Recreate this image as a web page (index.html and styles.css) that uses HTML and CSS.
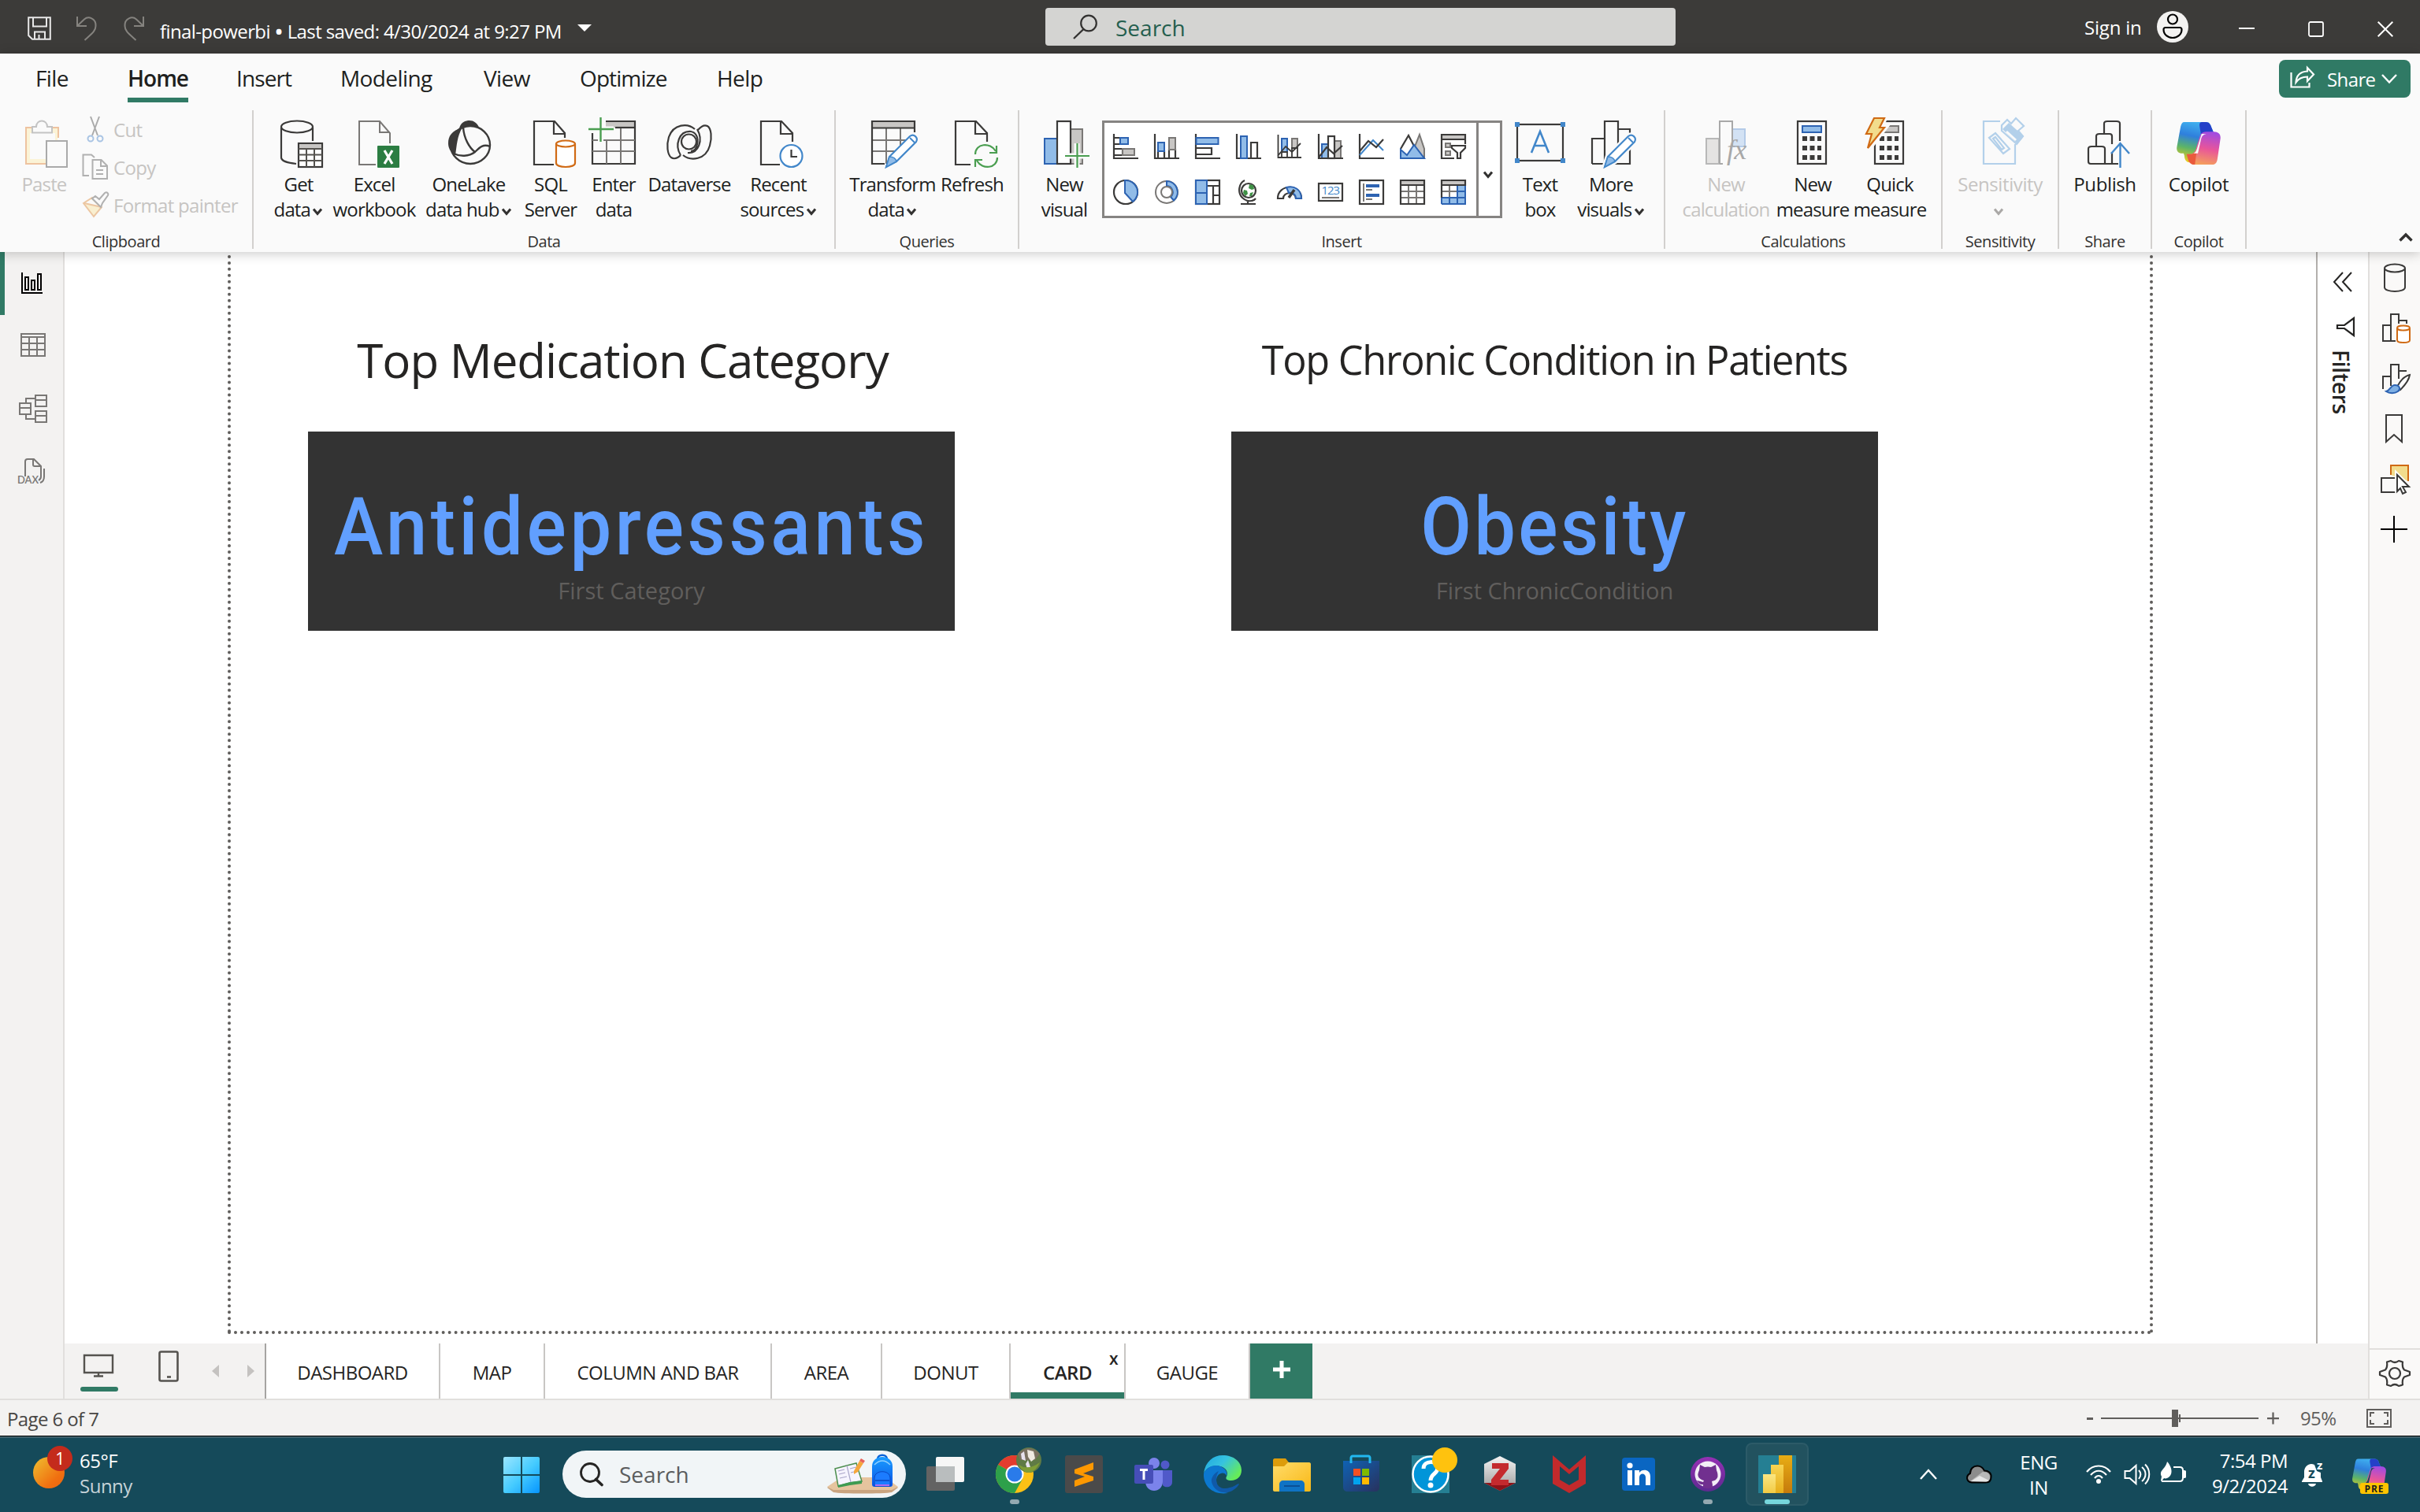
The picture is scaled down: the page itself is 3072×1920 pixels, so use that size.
FILE: index.html
```html
<!DOCTYPE html>
<html lang="en">
<head>
<meta charset="utf-8">
<title>final-powerbi</title>
<link rel="stylesheet" href="styles.css">
</head>
<body>
<svg class="defs" width="0" height="0">
  <defs>
    <linearGradient id="gWin" gradientUnits="userSpaceOnUse" x1="0" y1="0" x2="48" y2="48"><stop offset="0" stop-color="#9be6ff"/><stop offset=".5" stop-color="#45cbff"/><stop offset="1" stop-color="#0090ff"/></linearGradient>
    <linearGradient id="gSun" x1="0" y1="0" x2="1" y2="1"><stop offset="0" stop-color="#f0c030"/><stop offset=".7" stop-color="#f07010"/><stop offset="1" stop-color="#e86410"/></linearGradient>
    <linearGradient id="gCopL" x1=".5" y1="0" x2=".3" y2="1"><stop offset="0" stop-color="#3fb0ef"/><stop offset=".35" stop-color="#2f7fdc"/><stop offset=".65" stop-color="#5cb468"/><stop offset="1" stop-color="#f2cc1c"/></linearGradient>
    <linearGradient id="gCopR" x1=".6" y1="0" x2=".4" y2="1"><stop offset="0" stop-color="#a24be0"/><stop offset=".5" stop-color="#e8559a"/><stop offset="1" stop-color="#f5a25a"/></linearGradient>
    <linearGradient id="gEdge" x1="0" y1="0" x2="1" y2=".6"><stop offset="0" stop-color="#1fa6e0"/><stop offset=".5" stop-color="#36c3e0"/><stop offset="1" stop-color="#66ec58"/></linearGradient>
    <linearGradient id="gFold" x1="0" y1="0" x2="1" y2="1"><stop offset="0" stop-color="#ffdc6a"/><stop offset="1" stop-color="#f9b816"/></linearGradient>
    <linearGradient id="gStore" x1="0" y1="0" x2="1" y2="1"><stop offset="0" stop-color="#0f62b4"/><stop offset="1" stop-color="#28325e"/></linearGradient>
    <linearGradient id="gBag" x1="0" y1="0" x2="0" y2="1"><stop offset="0" stop-color="#1a9dff"/><stop offset="1" stop-color="#0a55e8"/></linearGradient>
    <linearGradient id="gGit" x1="0" y1="0" x2="0" y2="1"><stop offset="0" stop-color="#9530b4"/><stop offset="1" stop-color="#5e2a90"/></linearGradient>
    <linearGradient id="gBar1" x1="0" y1="0" x2="0" y2="1"><stop offset="0" stop-color="#e8ad14"/><stop offset="1" stop-color="#c57a0c"/></linearGradient>
    <linearGradient id="gBar2" x1="0" y1="0" x2="0" y2="1"><stop offset="0" stop-color="#f8d452"/><stop offset="1" stop-color="#e6ad1a"/></linearGradient>
    <linearGradient id="gBar3" x1="0" y1="0" x2="0" y2="1"><stop offset="0" stop-color="#fbe682"/><stop offset="1" stop-color="#f2cb45"/></linearGradient>
    <linearGradient id="gGrey" x1="0" y1="0" x2="0" y2="1"><stop offset="0" stop-color="#f4f4f4"/><stop offset="1" stop-color="#9a9a9a"/></linearGradient>
    <symbol id="chev" viewBox="0 0 14 10"><path d="M2 1.500l5 6 5-6" fill="none" stroke="currentColor" stroke-width="3"/></symbol>
    <symbol id="copilot" viewBox="0 0 64 60">
      <path d="M13 2h29c4 0 6 3 7 7l3 7h-7c-5 0-8 3-9 8l-6 24c-1 5-3 8-8 8h-2c-5 0-7-5-7-9l-1-3H10C4 44 2 40 3 35l5-27c1-4 2-6 5-6z" fill="url(#gCopL)"/>
      <path d="M36 2h6c4 0 6 3 7 7l3 7h-7c-5 0-8 3-9 8l-2-12c-1-6-2-9 2-10z" fill="#2440c8"/>
      <path d="M52 15c7 0 10 4 9 10l-4 27c-1 5-3 7-7 7H26c-4 0-7-3-8-8l-2-6h4c5 0 8-4 9-9l4-13c1-5 4-8 9-8z" fill="url(#gCopR)"/>
      <path d="M16 45h5c5 0 8-4 9-9l-3 23c-5 0-8-3-9-7z" fill="#ea5a3c"/>
      <path class="gap" d="M36 18h6c-4 1-6 3-7 8l-4 18h-6c3-1 4-4 5-7z"/>
    </symbol>
  </defs>
</svg>

<header class="titlebar">
  <div class="quick">
    <svg class="i-save" viewBox="0 0 30 30"><path d="M1.200 1.200h27.600v27.600H6l-4.800-4.800z M7 1.500v11h17v-11 M9 28.500v-9h13v9 M14.500 23v5" fill="none" stroke="#e8e8e8" stroke-width="2"/></svg>
    <svg class="i-undo" viewBox="0 0 28 30"><path d="M2 0v12h12M2 12L11 3.500C16-1 26 2 25.500 12c0 6-4 9-14 18" fill="none" stroke="#85837f" stroke-width="2"/></svg>
    <svg class="i-redo" viewBox="0 0 28 30"><path d="M26 0v12H14M26 12L17 3.500C12-1 2 2 2.500 12c0 6 4 9 14 18" fill="none" stroke="#85837f" stroke-width="2"/></svg>
    <span class="filename">final-powerbi <b>•</b> Last saved: 4/30/2024 at 9:27 PM</span>
    <i class="caret"></i>
  </div>
  <div class="search"><svg viewBox="0 0 32 32"><circle cx="20" cy="11.500" r="9.800" fill="none" stroke="#323130" stroke-width="2.200"/><path d="M13.500 19L1 31" stroke="#323130" stroke-width="2.400"/></svg><span>Search</span></div>
  <div class="winctl">
    <span class="signin">Sign in</span>
    <svg class="avatar" viewBox="0 0 40 40"><circle cx="20" cy="20" r="20" fill="#f3f2f1"/><circle cx="20" cy="10.500" r="6" fill="none" stroke="#000" stroke-width="2.200"/><path d="M11 21h18c2 0 2.500 1 2.500 2.500C31.500 30 26 34 20 34S8.500 30 8.500 23.500C8.500 22 9 21 11 21z" fill="none" stroke="#000" stroke-width="2.200"/></svg>
    <svg class="wc" viewBox="0 0 20 20"><path d="M0 9h20" stroke="#fff" stroke-width="2"/></svg>
    <svg class="wc" viewBox="0 0 20 20"><rect x="1" y="1" width="18" height="18" rx="2" fill="none" stroke="#fff" stroke-width="1.800"/></svg>
    <svg class="wc" viewBox="0 0 20 20"><path d="M.7.700l18.600 18.600M19.300.700L.7 19.300" stroke="#fff" stroke-width="2"/></svg>
  </div>
</header>

<section class="ribbon">
  <nav class="menu">
    <span class="m m-file">File</span><span class="m m-home"><b>Home</b></span><span class="m m-insert">Insert</span><span class="m m-model">Modeling</span><span class="m m-view">View</span><span class="m m-opt">Optimize</span><span class="m m-help">Help</span>
    <button class="share"><svg viewBox="0 0 32 28"><path d="M1.500 8v18.500h23V21M22 2l8 8.500-8 8.500v-5.500c-7 0-11 2-14.500 7C8 12 13 7 22 6.500z" fill="none" stroke="#fff" stroke-width="2.200"/></svg><span>Share</span><svg class="sc" viewBox="0 0 20 12"><path d="M1 1l9 9.500L19 1" fill="none" stroke="#fff" stroke-width="2.400"/></svg></button>
  </nav>
  <div class="groups">
    <div class="group g-clip">
      <div class="row">
        <div class="btn off w-paste">
          <svg class="ic" viewBox="0 0 64 64"><rect x="9" y="14" width="40" height="44" fill="#fbf3d6"/><rect x="14" y="20" width="32" height="33" fill="#fafafa"/><path d="M35 59H9V13h41v13" fill="none" stroke="#eec3a0" stroke-width="2"/><path d="M17 19.500V12h5c0-10 14-10 14 0h6v7.500z" fill="#fafafa" stroke="#c3c3c3" stroke-width="2"/><rect x="35" y="30" width="26" height="33" fill="#fafafa" stroke="#aaa" stroke-width="2"/></svg>
          <span>Paste</span>
        </div>
        <div class="clipcol">
          <div class="small"><svg viewBox="0 0 34 34"><path d="M11 1l9 24M22 1l-9 24" stroke="#ababab" stroke-width="2"/><circle cx="11" cy="29" r="3.500" fill="none" stroke="#a9c4e4" stroke-width="2"/><circle cx="23" cy="29" r="3.500" fill="none" stroke="#a9c4e4" stroke-width="2"/></svg>Cut</div>
          <div class="small"><svg viewBox="0 0 34 34"><path d="M9 28H1.500V1.500H12L16 5M13.500 8h11l7.500 7.500V32H13.500zM24 8v8h8M18 21h9M18 26h9" fill="none" stroke="#b0b0b0" stroke-width="2"/></svg>Copy</div>
          <div class="small"><svg viewBox="0 0 34 34"><path d="M2 15l11-7 12 12-10 12z" fill="#f9efd0" stroke="#ecc6a2" stroke-width="2"/><path d="M4 15l8-5 10 10z" fill="#fafafa"/><path d="M3 15l22 5" stroke="#ecc6a2" stroke-width="2"/><path d="M13 9l4-3 5 4 7-8c3-2 5 1 4 3l-7 10-2 5z" fill="#fafafa" stroke="#b0b0b0" stroke-width="2"/></svg>Format painter</div>
        </div>
      </div>
      <div class="gl">Clipboard</div>
    </div>

    <div class="group g-data">
      <div class="row">
        <div class="btn w88"><svg class="ic" viewBox="0 0 64 64"><path d="M29 59C18 58 10 55 10 51V13M50 13v17" fill="none" stroke="#3b3a39" stroke-width="2.200"/><ellipse cx="30" cy="12" rx="20" ry="7.500" fill="none" stroke="#3b3a39" stroke-width="2.200"/><rect x="32" y="33" width="30" height="30" fill="#fff" stroke="#3b3a39" stroke-width="2.200"/><rect x="33" y="34" width="28" height="5" fill="#c8c6c4"/><path d="M32 40h30M32 47.500h30M32 55h30M42 40v23M52 40v23" stroke="#55534f" stroke-width="2"/></svg><span>Get<br>data <svg class="ch"><use href="#chev"/></svg></span></div>
        <div class="btn w104"><svg class="ic" viewBox="0 0 64 64"><path d="M34 60H13V5h26l13 15v13M39 5v14h13" fill="none" stroke="#797775" stroke-width="2"/><rect x="36" y="36" width="28" height="28" rx="1" fill="#2b7d42"/><path d="M45 42l10 17M55 42L45 59" stroke="#fff" stroke-width="3.200"/></svg><span>Excel<br>workbook</span></div>
        <div class="btn w136"><svg class="ic" viewBox="0 0 64 64"><path d="M20 14C22 6 28 4 33 4s11 3 13 12c-8-3-18-3-26-2z" fill="#3b3a39"/><ellipse cx="34" cy="35" rx="25" ry="24" fill="#fafafa" stroke="#3b3a39" stroke-width="2.400"/><path d="M24 13C10 17 6 24 6 33c0 6 3 12 9 15 2-12 2-24 9-35z" fill="#3b3a39"/><path d="M13 46c8 4 19 4 27-2 5-5 10-11 19-7M25 13c1 14 8 26 15 31" fill="none" stroke="#3b3a39" stroke-width="2.400"/></svg><span>OneLake<br>data hub <svg class="ch"><use href="#chev"/></svg></span></div>
        <div class="btn w72"><svg class="ic" viewBox="0 0 64 64"><path d="M36 60H11V5h26l13 15v6M36 5v16h14" fill="none" stroke="#3b3a39" stroke-width="2.200"/><path d="M39 34v24c0 3 5 5 12 5s12-2 12-5V34" fill="#fff" stroke="#d06a14" stroke-width="2.200"/><ellipse cx="51" cy="33.500" rx="12" ry="4" fill="#fff" stroke="#d06a14" stroke-width="2.200"/></svg><span>SQL<br>Server</span></div>
        <div class="btn w88"><svg class="ic" viewBox="0 0 64 64"><rect x="22" y="4" width="37" height="9" fill="#c8c6c4"/><path d="M5 20v39h54V5H22" fill="none" stroke="#3b3a39" stroke-width="2.200"/><path d="M34 13h25" stroke="#3b3a39" stroke-width="2.200"/><path d="M5 29h54M5 43h54M23 29v30M41 14v45" stroke="#797775" stroke-width="2"/><path d="M0 15h32M15.500 0v31" stroke="#fafafa" stroke-width="7"/><path d="M0 15h32M15.500 0v31" stroke="#4a9e50" stroke-width="2.400"/></svg><span>Enter<br>data</span></div>
        <div class="btn w104"><svg class="ic" viewBox="0 0 64 64"><g fill="none" stroke="#3b3a39" stroke-width="2.200"><circle cx="31.500" cy="31" r="9.500"/><path d="M39 15C30 7 12 8 6 25c-3 10-2 22 3 26 6 4 12-3 12-3M24 48c10 8 29 6 34-12 3-10 2-22-3-25-6-3-11 4-12 5"/><path d="M21 48c-8-13-2-31 13-30 6 1 10 7 8 16-1 6-4 9-8 9M42 15c8 14 2 31-12 30"/></g></svg><span>Dataverse</span></div>
        <div class="btn w122"><svg class="ic" viewBox="0 0 64 64"><path d="M34 60H10V5h26l14 15v11M35 5v16h15" fill="none" stroke="#3b3a39" stroke-width="2.200"/><circle cx="48.500" cy="49" r="14" fill="#fff" stroke="#4287ca" stroke-width="2.200"/><path d="M48.500 41v9H56" fill="none" stroke="#3b3a39" stroke-width="2.200"/></svg><span>Recent<br>sources <svg class="ch"><use href="#chev"/></svg></span></div>
      </div>
      <div class="gl">Data</div>
    </div>

    <div class="group g-query">
      <div class="row">
        <div class="btn w120"><svg class="ic" viewBox="0 0 64 64"><rect x="6" y="5" width="54" height="9" fill="#c8c6c4"/><path d="M24 14v45M42 14v28M6 29h48M6 43h30" stroke="#797775" stroke-width="2"/><path d="M22 59H6V5h54v14M6 13.500h54" fill="none" stroke="#3b3a39" stroke-width="2.200"/><path d="M24 63l4-13 26-26c5-4 11 2 8 7L37 56z" fill="#fff" stroke="#4287ca" stroke-width="2.200"/><path d="M24 63l4-13c4 0 8 2 9 6z" fill="#91bce8" stroke="#4287ca" stroke-width="1.500"/><path d="M54 26l6 6" stroke="#4287ca" stroke-width="2"/></svg><span>Transform<br>data <svg class="ch"><use href="#chev"/></svg></span></div>
        <div class="btn w82"><svg class="ic" viewBox="0 0 64 64"><path d="M30 60H11V5h26l14 15v11M36 5v16h15" fill="none" stroke="#3b3a39" stroke-width="2.200"/><path d="M36 47c0-14 19-16 26-4M63 36v9h-9M64 51c0 14-19 16-26 4M36 63v-9h9" fill="none" stroke="#4a9e50" stroke-width="2.200"/></svg><span>Refresh</span></div>
      </div>
      <div class="gl">Queries</div>
    </div>

    <div class="group g-insert">
      <div class="row">
        <div class="btn w72"><svg class="ic" viewBox="0 0 64 64"><rect x="40" y="15" width="15" height="44" fill="#c8c6c4" stroke="#797775" stroke-width="2"/><rect x="7" y="27" width="16" height="32" fill="#91bce8" stroke="#2d63b2" stroke-width="2"/><rect x="23" y="5" width="17" height="54" fill="#fff" stroke="#3b3a39" stroke-width="2.200"/><path d="M33 49h31M48 33v31" stroke="#fafafa" stroke-width="7"/><path d="M33 49h31M48.500 33v31" stroke="#4a9e50" stroke-width="2.200"/></svg><span>New<br>visual</span></div>
        <div class="gallery">
          <div class="cells">
            <svg viewBox="0 0 32 32"><path d="M1 0v31h31" class="ax"/><path d="M2 5h7v8H2M2 19h10v8H2" class="k"/><rect x="9" y="5" width="10" height="8" class="bl"/><rect x="12" y="19" width="15" height="8" class="gr"/></svg>
            <svg viewBox="0 0 32 32"><path d="M1 0v31h31" class="ax"/><path d="M5 31v-9h8v9M19 31V20h8v11" class="k"/><rect x="5" y="11" width="8" height="11" class="bl"/><rect x="19" y="5" width="8" height="15" class="gr"/></svg>
            <svg viewBox="0 0 32 32"><path d="M1 0v31h31" class="ax"/><rect x="1.500" y="5" width="28" height="8" class="bl"/><path d="M2 18h19v8H2" class="k"/></svg>
            <svg viewBox="0 0 32 32"><path d="M1 0v31h31" class="ax"/><rect x="6" y="3" width="8" height="28" class="bl"/><path d="M19 31V11h8v20" class="k"/></svg>
            <svg viewBox="0 0 32 32"><rect x="6" y="6" width="7" height="17" class="bl"/><rect x="19" y="6" width="7" height="12" class="gr"/><path d="M6 30v-7h7v7M19 30V18h7v12" class="k2"/><path d="M1.500 1v29H31M1 28L11 16l8 7L30 12" class="k2"/></svg>
            <svg viewBox="0 0 32 32"><rect x="5" y="13" width="8" height="18" class="bl"/><rect x="21" y="9" width="8" height="22" class="gr"/><rect x="13" y="3" width="8" height="28" class="k" fill="#fff"/><path d="M1 0v31h31" class="ax"/><path d="M1 30l10-13 9 8 11-10" class="k"/></svg>
            <svg viewBox="0 0 32 32"><path d="M1 0v31h31" class="ax"/><path d="M1 27L18 8l13 13" fill="none" stroke="#4287ca" stroke-width="2"/><path d="M1 22L12 9l10 8 9-10" class="k"/></svg>
            <svg viewBox="0 0 32 32"><path d="M25 1l6 18v12H13z" class="gr"/><path d="M1 19L11 2l13 25" class="k" fill="#fff"/><path d="M1 20l8 7 9-13 13 17H1z" class="bl"/></svg>
            <svg viewBox="0 0 32 32"><rect x="1" y="1" width="30" height="6" class="gr"/><path d="M17 31H1V1h30v12M1 7h30" class="k"/><rect x="6" y="12" width="6" height="5" class="gr"/><rect x="6" y="22" width="6" height="5" class="gr"/><path d="M14 15h17v3l-6 6v7h-4v-7l-7-6z" class="k" fill="#fff"/></svg>
            <svg viewBox="0 0 32 32"><circle cx="16" cy="16" r="15" class="k" fill="#fff"/><path d="M15 1a15 15 0 0 1 10 27L15 17z" class="bl"/></svg>
            <svg viewBox="0 0 32 32"><circle cx="16" cy="16" r="14" fill="#fff" stroke="#797775" stroke-width="2"/><path d="M16 2a14 14 0 0 1 9 24.500l-4-4.500A8 8 0 0 0 16 8z" class="bl"/><circle cx="16" cy="16" r="7" fill="#fff" stroke="#797775" stroke-width="2"/></svg>
            <svg viewBox="0 0 32 32"><rect x="1" y="1" width="30" height="30" class="k" fill="#fff"/><path d="M15 8h16M23 8v23M23 20h8" class="k"/><path d="M1 1h14v30H1zM1 17h14" class="bl"/></svg>
            <svg viewBox="0 0 32 32"><circle cx="16" cy="14" r="9" class="k" fill="#fff"/><path d="M17 6l5 1 1 5-3 1-4-2zM10 13l4 1 1 4-3 3-3-4zM18 17l4-1-2 5h-3z" fill="#3f9146"/><path d="M11 1C3 5 2 17 8 23s14 5 17 1M15 27v4M6 31h19" class="k"/></svg>
            <svg viewBox="0 0 32 32"><path d="M1 24C1 5 31 5 31 24h-7c0-9-16-9-16 0z" class="k" fill="#fff"/><path d="M12 10c10-3 19 3 19 14h-7c0-5-4-8-9-7z" class="bl"/><path d="M15 23l7-10" stroke="#3b3a39" stroke-width="3.500"/></svg>
            <svg viewBox="0 0 32 32"><rect x="1" y="5" width="30" height="22" class="k" fill="#fff"/><text x="4.500" y="19" class="n123" textLength="23">123</text><path d="M5 23h22" stroke="#797775" stroke-width="2"/></svg>
            <svg viewBox="0 0 32 32"><rect x="1" y="1" width="30" height="30" class="k" fill="#fff"/><path d="M6 5v23" stroke="#797775" stroke-width="2"/><path d="M9 8h17M9 20h17" stroke="#2d63b2" stroke-width="4"/><path d="M9 13h8M9 25h8" stroke="#797775" stroke-width="2"/></svg>
            <svg viewBox="0 0 32 32"><rect x="1" y="1" width="30" height="6" fill="#c8c6c4"/><path d="M1 15h30M1 23h30M11 7v24M21 7v24" stroke="#797775" stroke-width="2"/><path d="M1 1h30v30H1zM1 7h30" class="k"/></svg>
            <svg viewBox="0 0 32 32"><rect x="1" y="1" width="30" height="6" fill="#c8c6c4"/><path d="M21 7h10v24H1v-8h20z" fill="#91bce8"/><path d="M1 15h20M11 7v16" stroke="#797775" stroke-width="2"/><path d="M21 7v24M1 23h30M11 23v8M21 15h10M1 31h30V7M1 23v8" fill="none" stroke="#2d63b2" stroke-width="2"/><path d="M1 23V1h30v6H1" class="k"/></svg>
          </div>
          <div class="drop"><svg class="ch"><use href="#chev"/></svg></div>
        </div>
        <div class="btn w80"><svg class="ic" viewBox="0 0 64 64"><rect x="3" y="9" width="58" height="46" fill="#fafafa" stroke="#3b3a39" stroke-width="2.200"/><path d="M0 6h6v6H0zM58 6h6v6h-6zM0 52h6v6H0zM58 52h6v6h-6z" fill="#4287ca"/><path d="M21 45l11-27 11 27M25 36h14" fill="none" stroke="#4287ca" stroke-width="2.600"/></svg><span>Text<br>box</span></div>
        <div class="btn w100"><svg class="ic" viewBox="0 0 64 64"><path d="M8 59V27h15M24 59V5h17v45M41 15h15v44H40M8 59h32" fill="none" stroke="#3b3a39" stroke-width="2.200"/><path d="M24 63l4-13 26-26c5-4 11 2 8 7L37 56z" fill="#fff" stroke="#fafafa" stroke-width="7"/><path d="M24 63l4-13 26-26c5-4 11 2 8 7L37 56z" fill="#fff" stroke="#4287ca" stroke-width="2.200"/><path d="M24 63l4-13c4 0 8 2 9 6z" fill="#91bce8" stroke="#4287ca" stroke-width="1.500"/><path d="M54 26l6 6" stroke="#4287ca" stroke-width="2"/></svg><span>More<br>visuals <svg class="ch"><use href="#chev"/></svg></span></div>
      </div>
      <div class="gl">Insert</div>
    </div>

    <div class="group g-calc">
      <div class="row">
        <div class="btn off w120"><svg class="ic" viewBox="0 0 64 64"><rect x="40" y="15" width="16" height="22" fill="#d3e2f4" stroke="#b4cbe8" stroke-width="2"/><rect x="7" y="27" width="16" height="32" fill="#e4e3e2" stroke="#b8b8b8" stroke-width="2"/><path d="M24 59V5h16v32M24 59h4" fill="none" stroke="#a8a8a8" stroke-width="2"/><text x="33" y="53" class="fx">fx</text></svg><span>New<br>calculation</span></div>
        <div class="btn w100"><svg class="ic" viewBox="0 0 64 64"><rect x="13" y="5" width="36" height="54" fill="#fafafa" stroke="#3b3a39" stroke-width="2.200"/><rect x="19" y="11" width="24" height="8" fill="#91bce8" stroke="#2d63b2" stroke-width="2"/><path d="M19 27h24M19 39h24M19 51h24" stroke="#3b3a39" stroke-width="6" stroke-dasharray="6 3.500"/></svg><span>New<br>measure</span></div>
        <div class="btn w96"><svg class="ic" viewBox="0 0 64 64"><rect x="13" y="5" width="36" height="54" fill="#fafafa" stroke="#3b3a39" stroke-width="2.200"/><rect x="22" y="11" width="21" height="8" fill="#c8c6c4" stroke="#797775" stroke-width="2"/><path d="M19 27h24M19 39h24M19 51h24" stroke="#3b3a39" stroke-width="6" stroke-dasharray="6 3.500"/><path d="M12 1h13l-6 12h6L5 39l5-18H2z" fill="#fafafa" stroke="#fafafa" stroke-width="8"/><path d="M12 1h13l-6 12h6L4 39l5-18H2z" fill="#f2dc8c" stroke="#d06a14" stroke-width="2.200"/></svg><span>Quick<br>measure</span></div>
      </div>
      <div class="gl">Calculations</div>
    </div>

    <div class="group g-sens">
      <div class="row">
        <div class="btn off w118"><svg class="ic" viewBox="0 0 64 64"><g fill="none" stroke="#b3d0ea" stroke-width="2.200"><path d="M32 5H11v54h40V34"/><path d="M18 26l8-6 18 20-8 6zM23 27l3-2 11 14-3 2z"/><path d="M34 10l7-7 5 5 6-7 10 10-7 6 6 7-8 10-19-17z" fill="#fafafa"/></g><path d="M35 15l8-8 19 17-8 10z" fill="#b3d0ea"/><path d="M40 18l12 11" stroke="#fafafa" stroke-width="3"/></svg><span>Sensitivity<br><svg class="ch"><use href="#chev"/></svg></span></div>
      </div>
      <div class="gl">Sensitivity</div>
    </div>
    <div class="group g-share">
      <div class="row">
        <div class="btn w96"><svg class="ic" viewBox="0 0 64 64"><g fill="none" stroke="#3b3a39" stroke-width="2.200"><path d="M11 56V40c0-2 2-3 4-3h13c2 0 4 1 4 3v19M21 36V24c0-2 2-3 4-3h13c2 0 3 1 3 3v10M31 20V8c0-2 2-3 4-3h12c2 0 4 1 4 3v22"/><path d="M49 59H14c-2 0-3-1-3-3M41 44v15"/></g><path d="M51.500 64V33M40 46l11.500-13L63 46" fill="none" stroke="#4287ca" stroke-width="2.400"/></svg><span>Publish</span></div>
      </div>
      <div class="gl">Share</div>
    </div>
    <div class="group g-cop">
      <div class="row">
        <div class="btn w96"><svg class="ic" viewBox="0 0 64 64"><use href="#copilot" x="1" y="4" width="62" height="57"/></svg><span>Copilot</span></div>
      </div>
      <div class="gl">Copilot</div>
    </div>
    <svg class="collapse" viewBox="0 0 18 12"><path d="M1.500 10.500L9 3l7.500 7.500" fill="none" stroke="#323130" stroke-width="3.400"/></svg>
  </div>
</section>

<main class="work">
  <nav class="rail">
    <div class="rl on"><svg viewBox="0 0 36 36"><path d="M5 4v26h26M9 10h4v16H9zM17 14h4v12h-4zM25 6h4v20h-4z" fill="none" stroke="#000" stroke-width="2"/></svg></div>
    <div class="rl"><svg viewBox="0 0 36 36"><path d="M3 4h30v28H3zM3 8h30M3 16h30M3 24h30M13 8v24M23 8v24" fill="none" stroke="#797775" stroke-width="2"/></svg></div>
    <div class="rl"><svg viewBox="0 0 36 36"><path d="M1 11h14v14H1zM1 17h14M21 1h14v14H21zM21 7h14M21 21h14v14H21zM21 27h14M9 11V5h12M9 25v6h12" fill="none" stroke="#797775" stroke-width="2"/></svg></div>
    <div class="rl"><svg viewBox="0 0 36 36"><path d="M10 24V5c0-2 1-3 3-3h8l9 9v13c0 3-1 4-3 5M20 2v7c0 1 1 2 2 2h8M34 14v10c0 5-2 7-5 8" fill="none" stroke="#797775" stroke-width="2"/><text x="0" y="33" class="dax" textLength="27" lengthAdjust="spacingAndGlyphs">DAX</text></svg></div>
  </nav>
  <div class="center">
    <div class="canvas">
      <div class="page"></div>
      <h2 class="vt vt1">Top Medication Category</h2>
      <h2 class="vt vt2">Top Chronic Condition in Patients</h2>
      <div class="card c1"><div class="val">Antidepressants</div><div class="cap">First Category</div></div>
      <div class="card c2"><div class="val">Obesity</div><div class="cap">First ChronicCondition</div></div>
    </div>
    <aside class="filters">
      <svg class="dbl" viewBox="0 0 26 26"><path d="M13 1L2 13l11 12M24 1L13 13l11 12" fill="none" stroke="#252423" stroke-width="2"/></svg>
      <svg class="fun" viewBox="0 0 24 26"><path d="M22 2v22L10 15H1v-4h9z" fill="none" stroke="#252423" stroke-width="2.200"/></svg>
      <span>Filters</span>
    </aside>
    <footer class="tabs">
      <div class="views">
        <div class="desk"><svg viewBox="0 0 40 30"><path d="M2 2h36v22H2zM20 24v4M14 28.500h12" fill="none" stroke="#55534f" stroke-width="2.400"/></svg><i></i></div>
        <svg class="phone" viewBox="0 0 26 40"><rect x="1.500" y="1.500" width="23" height="37" rx="2" fill="none" stroke="#55534f" stroke-width="2.600"/><path d="M11 33.500h5" stroke="#55534f" stroke-width="2.600"/></svg>
        <svg class="al" viewBox="0 0 9 16"><path d="M9 0v16L0 8z" fill="#c4c2c0"/></svg>
        <svg class="ar" viewBox="0 0 9 16"><path d="M0 0v16l9-8z" fill="#c4c2c0"/></svg>
      </div>
      <div class="tab t1">DASHBOARD</div><div class="tab t2">MAP</div><div class="tab t3">COLUMN AND BAR</div><div class="tab t4">AREA</div><div class="tab t5">DONUT</div><div class="tab t6 active"><b>CARD</b><em>x</em></div><div class="tab t7">GAUGE</div>
      <div class="add"><svg viewBox="0 0 22 22"><path d="M11 0v22M0 11h22" stroke="#fff" stroke-width="5"/></svg></div>
    </footer>
  </div>
  <nav class="panes">
    <svg viewBox="0 0 40 40"><path d="M7 9v24c0 3 6 5 13 5s13-2 13-5V9" fill="none" stroke="#3b3a39" stroke-width="2"/><ellipse cx="20" cy="8.500" rx="13" ry="5" fill="none" stroke="#3b3a39" stroke-width="2"/></svg>
    <svg viewBox="0 0 40 40"><path d="M21 37H5V17h9M15 37V3h10v12M25 11h10v4" fill="none" stroke="#3b3a39" stroke-width="2"/><path d="M23 21v15c0 2 4 3 8 3s8-1 8-3V21" fill="#fff" stroke="#d06a14" stroke-width="2"/><ellipse cx="31" cy="20.500" rx="8" ry="3" fill="#fff" stroke="#d06a14" stroke-width="2"/></svg>
    <svg viewBox="0 0 40 40"><path d="M5 34V18h9M15 30V3h10v18M25 11h10" fill="none" stroke="#3b3a39" stroke-width="2"/><path d="M39 16c-8 2-13 9-16 15l4 4c6-6 11-12 12-19z" fill="#fff" stroke="#3b3a39" stroke-width="2"/><path d="M9 37c5-1 6-8 11-8 6 0 8 5 4 8-4 3-11 3-15 0z" fill="#7fb0e4" stroke="#2d63b2" stroke-width="2"/></svg>
    <svg viewBox="0 0 40 40"><path d="M9 3h20v34l-10-9-10 9z" fill="none" stroke="#3b3a39" stroke-width="2"/></svg>
    <svg viewBox="0 0 40 40"><path d="M15 15V3h22v20" fill="#f2dc8c" stroke="#d06a14" stroke-width="2"/><path d="M21 37H3V19h18" fill="#faf9f8" stroke="#3b3a39" stroke-width="2"/><path d="M20 8l20 20-8 2 4 8-6 3-4-7-6 4z" fill="#fff"/><path d="M23 15l15 15h-8l4 7-4 2-3-7-4 4z" fill="#fff" stroke="#3b3a39" stroke-width="2"/></svg>
    <svg viewBox="0 0 40 40"><path d="M19 3v34M2 20h34" stroke="#000" stroke-width="2"/></svg>
    <div class="gear"><svg viewBox="0 0 40 40"><path d="M15 4q5 4 10 0l5 1.500q-1 7 2 10l7 2.500v4l-7 2.500q-3 3-2 10L25 36q-5-4-10 0l-5-1.500q1-7-2-10l-7-2.500v-4l7-2.500q3-3 2-10z" fill="none" stroke="#3b3a39" stroke-width="2.200" stroke-linejoin="round"/><circle cx="20" cy="20" r="7" fill="none" stroke="#3b3a39" stroke-width="2.200"/></svg></div>
  </nav>
</main>

<div class="status">
  <span class="pg">Page 6 of 7</span>
  <div class="zoom">
    <i class="minus"></i><div class="track"><i></i><u></u></div>
    <svg class="plus" viewBox="0 0 16 16"><path d="M8 0v16M0 8h16" stroke="#605e5c" stroke-width="2.400"/></svg>
    <span>95%</span>
    <svg class="fit" viewBox="0 0 32 24"><path d="M1 1h30v22H1zM5 10V5h5M22 5h5v5M27 14v5h-5M10 19H5v-5" fill="none" stroke="#605e5c" stroke-width="2"/></svg>
  </div>
</div>

<footer class="taskbar">
  <div class="weather">
    <svg viewBox="0 0 52 56"><circle cx="20" cy="34" r="20" fill="url(#gSun)"/><circle cx="34" cy="16" r="16" fill="#c42b1c"/><text x="34" y="23.500" class="one">1</text></svg>
    <div><span>65°F</span><span class="dim">Sunny</span></div>
  </div>
  <svg class="win" viewBox="0 0 46 46"><path d="M2 0h20v22H0V2a2 2 0 0 1 2-2zM24 0h20a2 2 0 0 1 2 2v20H24zM0 24h22v22H2a2 2 0 0 1-2-2zM24 24h22v20a2 2 0 0 1-2 2H24z" fill="url(#gWin)"/></svg>
  <div class="tsearch">
    <svg class="mag" viewBox="0 0 30 30"><circle cx="13" cy="13" r="11.500" fill="none" stroke="#252423" stroke-width="2.800"/><path d="M20.500 21.500l7.500 7" stroke="#252423" stroke-width="3.600" stroke-linecap="round"/></svg>
    <span>Search</span>
    <svg class="art" viewBox="0 0 90 50"><path d="M0 42l18-12h56l16 12-8 6c-10 2-64 2-74 0z" fill="#c9a480"/><path d="M0 41l18-12h56l16 12-8 4H8z" fill="#e6c49e"/><path d="M10 18l15-4 12-3 7 23-15 2-15 4z" fill="#f6f4ff" stroke="#4d8f4e" stroke-width="1.500"/><path d="M14 39l15-4 15-2v4l-15 2-15 3z" fill="#3f9b52"/><path d="M25 14l5 21M14 21l8-2M15 25l8-2M16 30l9-2M29 18l8-2M30 23l8-2" stroke="#a9a6c8" stroke-width="1.200"/><path d="M34 21l7-13 5 3-7 11-5 3z" fill="#f6a63c"/><path d="M41 8l2-3 5 3-2 3z" fill="#e8625a"/><path d="M64 6c0-7 12-7 12 0" fill="none" stroke="#0a62d8" stroke-width="2.500"/><path d="M57 38V15c0-16 26-16 26 0v23c0 2-1 3-3 3H60c-2 0-3-1-3-3z" fill="url(#gBag)"/><path d="M60 13q10-10 20 0" fill="none" stroke="#8fd0ff" stroke-width="1.500"/><path d="M60 40V30c0-11 20-11 20 0v10z" fill="#1c7cff" stroke="#0a48c0"/><path d="M61 33h18" stroke="#0a48c0" stroke-width="1.500"/><path d="M61 39h18" stroke="#b06cf0" stroke-width="2"/></svg>
  </div>
  <div class="apps">
    <div class="app"><svg viewBox="0 0 48 48"><rect x="12" y="2" width="36" height="32" rx="2" fill="#f6f6f6"/><rect x="0" y="14" width="36" height="31" rx="2" fill="#636363"/><path d="M12 14h24v20H12z" fill="#b9bdbe"/></svg></div>
    <div class="app run"><svg viewBox="0 0 48 48"><circle cx="24" cy="24" r="24" fill="#fbc116"/><path d="M24 24L3.200 12A24 24 0 0 1 44.800 12z" fill="#e33b2e"/><path d="M24 24L3.200 12A24 24 0 0 0 24 48l10-18z" fill="#2da04a"/><path d="M24 13h21a24 24 0 0 0-.5-1z" fill="#e33b2e"/><circle cx="24" cy="24" r="11.500" fill="#fff"/><circle cx="24" cy="24" r="9.500" fill="#2a7bea"/></svg>
      <svg class="badge" viewBox="0 0 32 32"><circle cx="16" cy="16" r="16" fill="#5f7a45"/><path d="M2 8q14-14 28 0l-6 8H5z" fill="#79705f"/><path d="M14 3l8 2 2 9-5 4-4-6z" fill="#efe9e0"/><path d="M6 8l4-3 2 12-5-2zM12 21l3-5 3 9-4 2z" fill="#e8e2ee"/><path d="M3 22q12 8 27-3-5 12-14 13-9-1-13-10z" fill="#7f9d36"/></svg></div>
    <div class="app"><svg viewBox="0 0 48 48"><rect width="48" height="48" rx="3" fill="#4a4a4a"/><path d="M12 18l24-9v9l-13 5 13 4v5l-24 8v-8l13-5-13-4z" fill="#ff9800"/></svg></div>
    <div class="app"><svg viewBox="0 0 48 48"><circle cx="39" cy="12" r="5.500" fill="#5059c9"/><path d="M33 19h15v15c0 7-9 8-12 4z" fill="#5059c9"/><circle cx="25" cy="10" r="7" fill="#7b83eb"/><path d="M14 19h22v14c0 16-22 16-22 0z" fill="#7b83eb"/><rect x="0" y="12" width="24" height="24" rx="2" fill="#464eb8"/><path d="M7 18.500h10M12 18.500V31" stroke="#fff" stroke-width="3"/></svg></div>
    <div class="app"><svg viewBox="0 0 48 48"><path d="M0 23C2 8 12 0 24 0c14 0 24 8 24 19 0 8-6 13-13 13-5 0-8-2-6-5 2-4 1-9-5-12C15 11 4 14 0 23z" fill="url(#gEdge)"/><path d="M0 23c5-10 16-12 23-8 6 3 7 8 6 11-3-7-13-3-13 6 0 8 7 15 15 16C13 51-1 40 0 23z" fill="#0c78d0"/><path d="M16 31c0 10 9 13 17 10 5-1 9-4 11-5 1 0 1 1 0 2-9 13-29 13-34-4-1-6 4-12 9-14-2 3-3 7-3 11z" fill="#1059a8"/></svg></div>
    <div class="app"><svg viewBox="0 0 48 48"><path d="M0 6c0-1 1-2 2-2h14l4 5v8H0z" fill="#dd9c0b"/><path d="M0 14h14l5-5h27c1 0 2 1 2 2v33c0 1-1 2-2 2H2c-1 0-2-1-2-2z" fill="url(#gFold)"/><path d="M8 46V37c0-3 2-5 5-5h22c3 0 5 2 5 5v9z" fill="#0f73c4"/><path d="M14 39h20" stroke="#0a4f96" stroke-width="2"/></svg></div>
    <div class="app"><svg viewBox="0 0 48 48"><path d="M1 7h46v33c0 4-2 6-6 6H7c-4 0-6-2-6-6z" fill="url(#gStore)"/><path d="M11 10V3c0-1 1-2 2-2h20c1 0 2 1 2 2v7" fill="none" stroke="#22b8f0" stroke-width="3"/><path d="M14 17h9v9h-9z" fill="#f25022"/><path d="M25 17h9v9h-9z" fill="#7fba00"/><path d="M14 28h9v9h-9z" fill="#00a4ef"/><path d="M25 28h9v9h-9z" fill="#ffb900"/></svg></div>
    <div class="app"><svg viewBox="0 0 48 48"><rect width="48" height="48" fill="#257f93"/><circle cx="24" cy="24" r="22.500" fill="#0095d9" stroke="#fff" stroke-width="2.500"/><path d="M15 17c0-11 18-11 18-1 0 8-9 7-9 16" fill="none" stroke="#fff" stroke-width="5"/><circle cx="24" cy="38" r="3.500" fill="#fff"/></svg><i class="badge dotb"></i></div>
    <div class="app"><svg viewBox="0 0 48 48"><path d="M24 1l20 10v24L24 45 4 35V11z" fill="url(#gGrey)"/><path d="M24 35h20L24 45 4 35z" fill="#8e1218"/><path d="M14 10h21v7l-11 14h11v7H13v-7l11-14H14z" fill="#c42a2e"/></svg></div>
    <div class="app"><svg viewBox="0 0 48 48"><path d="M3 0l21 18L45 0v36L24 48 3 36zM12 14v17l12 7 12-7V14L24 24z" fill="#c22a2c" fill-rule="evenodd"/></svg></div>
    <div class="app"><svg viewBox="0 0 48 48"><rect x="3" y="3" width="42" height="42" rx="4" fill="#0a66c2"/><path d="M10 19h6v19h-6zM19 19h6v3c3-5 14-5 14 5v11h-6V28c0-6-8-6-8 0v10h-6z" fill="#fff"/><circle cx="13" cy="13" r="3.600" fill="#fff"/></svg></div>
    <div class="app run"><svg viewBox="0 0 48 48"><circle cx="24" cy="24" r="22" fill="url(#gGit)"/><circle cx="24" cy="24" r="16.500" fill="#f3eef6"/><path d="M14 12l6 3q4-1 8 0l6-3 1 7q5 12-6 14 1 3 1 8-6 2-12 0v-4q-5 1-8-5 5 1 8 2l1-2q-11-3-6-13z" fill="#71308f"/></svg></div>
    <div class="app current"><svg viewBox="0 0 48 48"><rect width="48" height="48" fill="#257f93"/><path d="M26 0h17v48H26z" fill="url(#gBar1)"/><path d="M16 12h16v36H16z" fill="url(#gBar2)"/><path d="M6 24h16v24H6z" fill="url(#gBar3)"/></svg></div>
  </div>
  <div class="tray">
    <svg class="t-chev" viewBox="0 0 22 14"><path d="M1 13L11 2l10 11" fill="none" stroke="#fff" stroke-width="2.400"/></svg>
    <svg class="t-cloud" viewBox="0 0 34 24"><path d="M8 22.500C1 22 0 14 6 11c0-6 4-9.500 9-9.500 4 0 7 2 9 6 5 0 9 3 8.500 8 0 5-3 7-7 7z" fill="#8c8c8c" stroke="#000" stroke-width="2"/><path d="M6 21L22 9c6 0 9 3 9 7 0 4-3 5-6 5z" fill="#b8b8b8"/><path d="M7 21l11-7 12 6c-2 1-3 1.500-5 1.500z" fill="#e6e6e6"/></svg>
    <div class="lang"><span>ENG</span><span>IN</span></div>
    <svg class="t-wifi" viewBox="0 0 32 24"><path d="M1 9C9-1 23-1 31 9M6 13c6-7 14-7 20 0M11 17c3-4 7-4 10 0" fill="none" stroke="#fff" stroke-width="2.200"/><circle cx="16" cy="21" r="3" fill="#fff"/></svg>
    <svg class="t-vol" viewBox="0 0 34 28"><path d="M1.500 10v9h6l8 7V3l-8 7zM19 9c3 3 3 7 0 11M23 5c6 5 6 13 0 18M27 1.500c7 7 7 18 0 25" fill="none" stroke="#fff" stroke-width="2"/></svg>
    <svg class="t-bat" viewBox="0 0 34 28"><path d="M17 7h8c3 0 4 1 4 4v10c0 3-1 4-4 4H2" fill="none" stroke="#fff" stroke-width="2"/><path d="M30 11c3 0 3 1 3 2v6c0 1 0 2-3 2z" fill="#fff"/><path d="M9 0c5 5 8 14 3 19-2 2-5 3-7 2l-3 4-1-1 1-5C-2 11 7 10 9 0z" fill="#fff"/></svg>
    <div class="clock"><span>7:54 PM</span><span>9/2/2024</span></div>
    <svg class="t-bell" viewBox="0 0 28 32"><path d="M0 24l3-5V11C4 4 10 0 16 3l3 8 5 2v6l2 5v1H0zM8 27h10c-1 5-9 5-10 0z" fill="#fff"/><text x="8" y="20" class="z1">z</text><text x="19" y="9" class="z2">z</text></svg>
    <svg class="t-cop" viewBox="0 0 50 48"><use href="#copilot" x="0" y="0" width="47" height="44"/><rect x="12" y="32" width="36" height="14" rx="3" fill="#ffc400"/><text x="30" y="43.500" class="pre">PRE</text></svg>
  </div>
</footer>
</body>
</html>
```
FILE: styles.css
```css
* { box-sizing: border-box; }
html, body { margin: 0; }
body {
  width: 3072px; height: 1920px; overflow: hidden; background: #fff;
  font-family: "Open Sans", "Noto Sans", sans-serif;
  font-size: 24px; letter-spacing: -.6px; color: #201f1e;
  display: flex; flex-direction: column;
}
svg { display: block; flex: none; overflow: visible; }
.defs { position: absolute; }
.gap { fill: var(--gap, #fafafa); }
b, em, i { font-style: normal; }

/* title bar */
.titlebar { height: 68px; background: #3c3b39; color: #fff; display: grid; grid-template-columns: 1327px 800px 1fr; flex: none; }
.quick { display: flex; align-items: flex-start; padding-left: 35px; white-space: nowrap; }
.i-save { width: 30px; height: 30px; margin-top: 21px; }
.i-undo, .i-redo { width: 28px; height: 30px; margin-top: 21px; }
.i-undo { margin-left: 31px; }
.i-redo { margin-left: 32px; }
.filename { margin-left: 19px; margin-top: 24px; line-height: 32px; width: 517px; }
.filename b { margin: 0 1px; }
.caret { border: 9px solid transparent; border-top: 9px solid #fff; border-bottom: 0; margin: 31px 0 0 13px; }
.search { height: 48px; margin-top: 10px; border-radius: 4px; background: #d4d4d2; color: #255f4f; font-size: 28px; letter-spacing: 0; display: flex; align-items: center; padding-left: 35px; }
.search svg { width: 32px; height: 32px; margin-right: 22px; }
.search span { line-height: 40px; margin-top: 2px; }
.winctl { display: flex; padding-left: 519px; letter-spacing: -.2px; }
.signin { line-height: 32px; margin-top: 19px; width: 92px; white-space: nowrap; }
.avatar { width: 40px; height: 40px; margin-top: 14px; }
.wc { width: 20px; height: 20px; margin: 27px 0 0 68px; }
.avatar + .wc { margin-left: 64px; }

/* ribbon */
.ribbon { height: 252px; flex: none; background: #fafafa; box-shadow: 0 2px 14px rgba(0,0,0,.22); position: relative; z-index: 2; }
.menu { height: 72px; display: flex; padding: 8px 12px 0 45px; font-size: 28px; }
.m { line-height: 36px; padding-top: 5px; }
.m b { font-weight: 600; letter-spacing: -1px; display: inline-block; height: 49px; border-bottom: 6px solid #307a65; }
.m-file { width: 117px; } .m-home { width: 138px; } .m-insert { width: 132px; } .m-model { width: 182px; }
.m-view { width: 122px; } .m-opt { width: 174px; }
.m-insert, .m-opt { letter-spacing: -.9px; }
.share { margin-left: auto; width: 167px; height: 48px; border: 0; border-radius: 8px; background: #307a65; color: #fff; font: inherit; font-size: 24px; letter-spacing: -.6px; display: flex; align-items: center; padding: 0 0 0 14px; }
.share svg { width: 32px; height: 28px; margin-right: 15px; margin-top: -4px; }
.share span { width: 59px; }
.share .sc { width: 20px; height: 12px; margin: 0 0 0 10px; }
.groups { display: flex; height: 176px; position: relative; }
.group { border-right: 2px solid #d2d0ce; display: flex; flex-direction: column; }
.group .row { height: 153px; display: flex; padding-top: 9px; }
.gl { font-size: 20px; letter-spacing: -.45px; line-height: 28px; height: 23px; text-align: center; color: #323130; }
.g-clip { width: 322px; } .g-data { width: 739px; } .g-query { width: 233px; } .g-insert { width: 820px; }
.g-calc { width: 352px; } .g-sens { width: 148px; } .g-share { width: 118px; } .g-cop { width: 120px; }
.g-data .row { padding-left: 13px; } .g-query .row { padding-left: 12px; } .g-insert .row { padding-left: 21px; }
.g-calc .row { padding-left: 17px; } .g-sens .row, .g-share .row, .g-cop .row { justify-content: center; }
.btn { display: flex; flex-direction: column; align-items: center; flex: none; line-height: 32px; letter-spacing: -.85px; text-align: center; white-space: nowrap; }
.btn .ic { width: 64px; height: 64px; margin-bottom: 5px; }
.off { color: #c6c4c2; }
.ch { display: inline-block; width: 14px; height: 10px; vertical-align: 1px; color: #323130; }
.off .ch { color: #aaa8a6; }
.btn span .ch { margin-left: -3px; }
.g-sens .btn, .g-share .btn, .g-cop .btn { letter-spacing: -.4px; }
.w72 { width: 72px; } .w80 { width: 80px; } .w82 { width: 82px; } .w88 { width: 88px; } .w96 { width: 96px; }
.w100 { width: 100px; } .w104 { width: 104px; } .w118 { width: 118px; } .w120 { width: 120px; } .w122 { width: 122px; } .w136 { width: 136px; }
.w-paste { width: 76px; margin-left: 18px; }
.clipcol { display: flex; flex-direction: column; margin: -9px 0 0 10px; letter-spacing: -.7px; }
.small { display: flex; align-items: center; height: 48px; color: #c6c4c2; white-space: nowrap; }
.small svg { width: 34px; height: 34px; margin-right: 6px; }
.gallery { width: 508px; height: 124px; margin: 4px 8px 0 12px; border: 3px solid #868482; background: #fff; display: flex; }
.cells { width: 472px; padding: 14px 0 0 11px; display: grid; grid-template-columns: repeat(9, 52px); grid-auto-rows: 58px; flex: none; }
.cells svg { width: 32px; height: 32px; }
.ax, .k { fill: none; stroke: #3b3a39; stroke-width: 2.2; }
.k[fill] { fill: #fff; }
.k2 { fill: none; stroke: #3b3a39; stroke-width: 1.8; }
.bl { fill: #91bce8; stroke: #2d63b2; stroke-width: 2; }
.gr { fill: #c8c6c4; stroke: #797775; stroke-width: 2; }
.n123 { font-size: 15px; fill: #4287ca; }
.fx { font: italic 36px "Liberation Serif", serif; fill: #a8a8a8; }
.drop { width: 30px; border-left: 3px solid #868482; display: flex; align-items: center; justify-content: center; padding-top: 13px; }
.drop .ch { margin-right: 3px; }
.collapse { width: 18px; height: 12px; position: absolute; right: 9px; bottom: 9px; }

/* work area */
.work { height: 1458px; flex: none; display: flex; border-bottom: 2px solid #e1dfdd; }
.rail { width: 82px; background: #f3f2f1; border-right: 2px solid #e1dfdd; }
.rl { height: 81px; display: flex; align-items: center; padding: 0 0 0 24px; }
.rl.on { height: 80px; border-left: 6px solid #307a65; padding-left: 17px; }
.rl svg { width: 36px; height: 36px; }
.rl:nth-child(2) svg { margin-top: -5px; }
.rl:nth-child(3) svg { margin-top: -6px; }
.rl:nth-child(4) svg { margin: -8px 0 0 -2px; }
.dax { font: 600 13px "Lato", sans-serif; letter-spacing: 0; fill: #797775; }
.center { width: 2924px; display: grid; grid-template-columns: 2858px 66px; grid-template-rows: 1386px 70px; }
.canvas { position: relative; overflow: hidden; background: #fff; }
.page { position: absolute; left: 207px; top: -28px; width: 2444px; height: 1402px; border: 4px dotted #605e5c; }
.vt { position: absolute; margin: 0; font-weight: 400; white-space: nowrap; color: #252423; text-align: center; width: 821px; }
.vt1 { left: 298px; top: 96px; font-size: 60px; line-height: 82px; letter-spacing: -1px; }
.vt2 { left: 1481px; top: 103px; font-size: 50.500px; line-height: 68px; letter-spacing: -1.3px; }
.card { position: absolute; top: 228px; width: 821px; height: 253px; background: #333; text-align: center; padding-top: 61px; }
.c1 { left: 309px; } .c2 { left: 1481px; }
.val { font: 500 102px/120px Roboto, sans-serif; color: #619fff; letter-spacing: 5px; transform: scaleX(.92); white-space: nowrap; }
.c2 .val { letter-spacing: 3.6px; }
.cap { font-size: 29px; line-height: 40px; color: #605e5c; margin-top: 1px; letter-spacing: 0; }
.filters { border-left: 2px solid #b3b0ad; display: flex; flex-direction: column; align-items: center; padding-top: 25px; }
.dbl { width: 26px; height: 26px; }
.fun { width: 24px; height: 26px; margin-top: 31px; margin-left: 8px; }
.filters span { writing-mode: vertical-rl; font-weight: 600; font-size: 28px; line-height: 40px; letter-spacing: -.2px; margin: 16px 5px 0 0; color: #252423; }
.tabs { grid-column: 1 / 3; background: #f3f2f1; display: flex; }
.views { width: 256px; border-right: 2px solid #a6a4a2; display: flex; }
.desk { width: 48px; margin: 12px 0 0 20px; display: flex; flex-direction: column; align-items: center; }
.desk svg { width: 40px; height: 32px; margin-right: 2px; }
.desk i { width: 48px; height: 6px; border-radius: 3px; background: #307a65; margin-top: 11px; }
.phone { width: 26px; height: 40px; margin: 9px 0 0 51px; }
.al, .ar { width: 9px; height: 16px; margin-top: 27px; }
.al { margin-left: 42px; } .ar { margin-left: 36px; }
.tab { background: #fff; border-right: 2px solid #c8c6c4; display: flex; align-items: center; justify-content: center; padding-top: 2px; white-space: nowrap; position: relative; color: #252423; letter-spacing: -.5px; }
.t1 { width: 221px; } .t2 { width: 133px; } .t3 { width: 288px; } .t4 { width: 140px; } .t5 { width: 163px; } .t6 { width: 146px; } .t7 { width: 158px; }
.active { box-shadow: inset 0 -8px #307a65; }
.active b { font-weight: 600; }
.active em { position: absolute; right: 8px; top: 3px; font-weight: 600; font-size: 21px; line-height: 32px; }
.add { width: 79px; background: #307a65; display: flex; justify-content: center; padding-top: 22px; }
.add svg { width: 22px; height: 22px; }
.panes { width: 66px; border-left: 2px solid #e1dfdd; background: #faf9f8; display: flex; flex-direction: column; align-items: flex-start; padding-top: 12px; gap: 24px; }
.panes > svg { width: 40px; height: 40px; margin-left: 12px; }
.gear { margin-top: auto; height: 64px; width: 64px; border-top: 2px solid #e1dfdd; padding: 10px 0 0 12px; }
.gear svg { width: 40px; height: 40px; }

/* status bar */
.status { height: 46px; flex: none; background: #f3f2f1; border-bottom: 1px solid #000; display: flex; justify-content: space-between; color: #484644; line-height: 46px; padding: 1px 36px 0 9px; }
.zoom { display: flex; align-items: center; color: #605e5c; height: 44px; }
.minus { width: 8px; height: 3px; background: #605e5c; }
.track { width: 200px; height: 2px; background: #605e5c; margin: 0 11px 0 10px; display: flex; align-items: center; }
.track i { width: 8px; height: 22px; background: #605e5c; margin-left: 90px; flex: none; }
.track u { width: 2px; height: 10px; background: #605e5c; margin-left: 1px; flex: none; }
.plus { width: 15px; height: 16px; margin-right: 27px; }
.zoom span { width: 84px; }
.fit { width: 32px; height: 24px; }

/* taskbar */
.taskbar { --gap: #154a5a; height: 96px; flex: none; background: #154a5a; border-top: 2px solid #3f616c; color: #fff; display: flex; position: relative; line-height: 32px; letter-spacing: -.5px; }
.weather { width: 639px; display: flex; padding-left: 42px; }
.weather svg { width: 52px; height: 56px; margin: 10px 7px 0 0; }
.weather div, .lang, .clock { display: flex; flex-direction: column; margin-top: 13px; }
.dim { color: #c5d3d8; }
.one { font-size: 21px; fill: #fff; text-anchor: middle; }
.win { width: 46px; height: 46px; margin-top: 24px; }
.tsearch { width: 436px; height: 60px; margin: 16px 0 0 29px; border-radius: 30px; background: #f1f5f7; color: #5b5d5e; font-size: 28px; letter-spacing: 0; display: flex; align-items: center; padding-left: 22px; }
.mag { width: 30px; height: 30px; }
.tsearch span { margin-left: 20px; flex: 1; }
.art { width: 90px; height: 50px; margin-right: 10px; }
.apps { display: flex; gap: 8px; margin: 6px 0 0 10px; }
.app { width: 80px; height: 80px; border-radius: 8px; padding: 16px; position: relative; }
.app > svg:first-child { width: 48px; height: 48px; }
.badge { position: absolute; left: 42px; top: 6px; width: 32px; height: 32px; }
.dotb { border-radius: 50%; background: #ffc20e; }
.run::after, .current::after { content: ""; position: absolute; bottom: 2px; left: 34px; width: 12px; height: 6px; border-radius: 3px; background: #94a9b1; }
.current { background: #22525f; border: 2px solid #2c5b68; padding: 14px; }
.current::after { left: 22px; width: 32px; bottom: 0; background: #76d6dc; }
.tray { display: flex; align-items: flex-start; margin-left: 141px; white-space: nowrap; }
.t-chev { width: 22px; height: 14px; margin-top: 39px; }
.t-cloud { width: 34px; height: 24px; margin: 34px 0 0 36px; }
.lang { width: 60px; text-align: center; margin: 15px 0 0 29px; }
.t-wifi { width: 32px; height: 24px; margin: 34px 0 0 30px; }
.t-vol { width: 34px; height: 28px; margin: 32px 0 0 16px; }
.t-bat { width: 34px; height: 28px; margin: 30px 0 0 12px; }
.clock { width: 128px; text-align: right; }
.t-bell { width: 28px; height: 32px; margin: 31px 0 0 18px; }
.t-cop { width: 50px; height: 48px; margin: 25px 0 0 34px; }
.z1 { font: 700 18px "Open Sans", sans-serif; fill: #154a5a; }
.z2 { font: 700 15px "Open Sans", sans-serif; fill: #fff; }
.pre { font: 700 12px "Open Sans", sans-serif; fill: #201f1e; text-anchor: middle; letter-spacing: 1px; }
```
